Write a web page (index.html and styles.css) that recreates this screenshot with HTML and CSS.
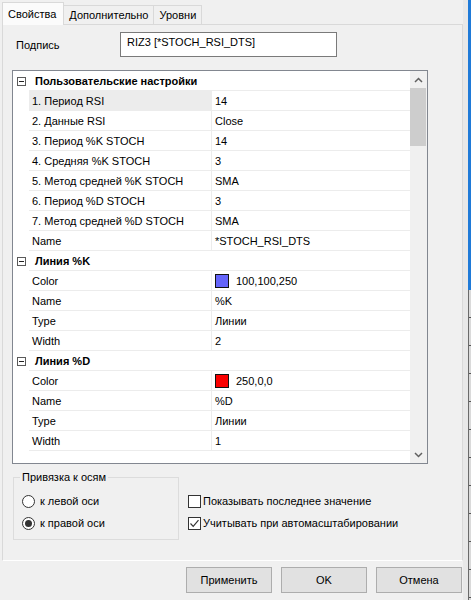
FILE: index.html
```html
<!DOCTYPE html>
<html>
<head>
<meta charset="utf-8">
<link rel="stylesheet" href="styles.css">
</head>
<body>
<div class="screen">
  <div class="dialog">
    <div class="tabs">
      <div class="tab active">Свойства</div>
      <div class="tab">Дополнительно</div>
      <div class="tab">Уровни</div>
    </div>
    <div class="page">
      <div class="caption-row">
        <div class="label">Подпись</div>
        <div class="textbox">RIZ3 [*STOCH_RSI_DTS]</div>
      </div>
      <div class="pgrid">
        <div class="rows">
          <div class="row cat"><div class="gut"><span class="minus"></span></div><div class="cat-name">Пользовательские настройки</div></div>
          <div class="row"><div class="gut"></div><div class="name sel">1. Период RSI</div><div class="val">14</div></div>
          <div class="row"><div class="gut"></div><div class="name">2. Данные RSI</div><div class="val">Close</div></div>
          <div class="row"><div class="gut"></div><div class="name">3. Период %K STOCH</div><div class="val">14</div></div>
          <div class="row"><div class="gut"></div><div class="name">4. Средняя %K STOCH</div><div class="val">3</div></div>
          <div class="row"><div class="gut"></div><div class="name">5. Метод средней %K STOCH</div><div class="val">SMA</div></div>
          <div class="row"><div class="gut"></div><div class="name">6. Период %D STOCH</div><div class="val">3</div></div>
          <div class="row"><div class="gut"></div><div class="name">7. Метод средней %D STOCH</div><div class="val">SMA</div></div>
          <div class="row"><div class="gut"></div><div class="name">Name</div><div class="val">*STOCH_RSI_DTS</div></div>
          <div class="row cat"><div class="gut"><span class="minus"></span></div><div class="cat-name">Линия %K</div></div>
          <div class="row"><div class="gut"></div><div class="name">Color</div><div class="val"><span class="swatch blue"></span>100,100,250</div></div>
          <div class="row"><div class="gut"></div><div class="name">Name</div><div class="val">%K</div></div>
          <div class="row"><div class="gut"></div><div class="name">Type</div><div class="val">Линии</div></div>
          <div class="row"><div class="gut"></div><div class="name">Width</div><div class="val">2</div></div>
          <div class="row cat"><div class="gut"><span class="minus"></span></div><div class="cat-name">Линия %D</div></div>
          <div class="row"><div class="gut"></div><div class="name">Color</div><div class="val"><span class="swatch red"></span>250,0,0</div></div>
          <div class="row"><div class="gut"></div><div class="name">Name</div><div class="val">%D</div></div>
          <div class="row"><div class="gut"></div><div class="name">Type</div><div class="val">Линии</div></div>
          <div class="row"><div class="gut"></div><div class="name">Width</div><div class="val">1</div></div>
        </div>
        <div class="vscroll">
          <div class="arrow"><svg width="9" height="6" viewBox="0 0 9 6"><path d="M1 5 L4.5 1.5 L8 5" fill="none" stroke="#606060" stroke-width="1.5"/></svg></div>
          <div class="track"><div class="thumb"></div></div>
          <div class="arrow"><svg width="9" height="6" viewBox="0 0 9 6"><path d="M1 1 L4.5 4.5 L8 1" fill="none" stroke="#606060" stroke-width="1.5"/></svg></div>
        </div>
      </div>
      <div class="bottom">
        <fieldset class="group">
          <legend>Привязка к осям</legend>
          <div class="opt"><span class="radio"></span>к левой оси</div>
          <div class="opt"><span class="radio on"><span class="dot"></span></span>к правой оси</div>
        </fieldset>
        <div class="checks">
          <div class="opt"><span class="cbox"></span>Показывать последнее значение</div>
          <div class="opt"><span class="cbox"><svg width="11" height="11" viewBox="0 0 11 11"><path d="M1.5 5.5 L4.2 8.3 L9.5 2.2" fill="none" stroke="#333" stroke-width="1.2"/></svg></span>Учитывать при автомасштабировании</div>
        </div>
      </div>
    </div>
    <div class="buttons">
      <div class="btn">Применить</div>
      <div class="btn">OK</div>
      <div class="btn">Отмена</div>
    </div>
  </div>
  <div class="side">
    <div class="side-a"></div>
    <div class="side-b">
      <div class="side-blue"></div>
      <div class="side-scale"></div>
    </div>
  </div>
</div>
</body>
</html>
```
FILE: styles.css
```css
* { box-sizing: border-box; }
html, body { margin: 0; padding: 0; }
body {
  background: #f0f0f0;
  font-family: "Liberation Sans", Arial, sans-serif;
  font-size: 11px;
  color: #000;
  width: 471px;
  height: 600px;
  overflow: hidden;
}
.screen { display: flex; width: 471px; height: 600px; }
.dialog { width: 463px; display: flex; flex-direction: column; }

.tabs {
  height: 24px;
  display: flex;
  align-items: flex-end;
  padding-left: 2px;
  position: relative;
  z-index: 1;
}
.tab {
  height: 19px;
  padding: 0 5px 0 5px;
  border: 1px solid #d9d9d9;
  border-bottom: none;
  background: #f0f0f0;
  display: flex;
  align-items: center;
  margin-left: -1px;
}
.tab.active {
  height: 23px;
  margin-bottom: -1px;
  margin-left: 0;
  padding: 0 7px 1px 5px;
  background: #fbfbfb;
  position: relative;
  z-index: 2;
}

.page {
  margin-left: 2px;
  width: 461px;
  height: 537px;
  border: 1px solid #d9d9d9;
  border-bottom-color: #ffffff;
  padding: 7px 0 0 9px;
  display: flex;
  flex-direction: column;
}
.caption-row { display: flex; align-items: center; height: 25px; }
.label { width: 108px; padding-left: 4px; padding-top: 1px; }
.textbox {
  width: 217px;
  height: 25px;
  border: 1px solid #7a7a7a;
  background: #fff;
  padding: 3px 0 0 6px;
}

.pgrid {
  margin-top: 13px;
  width: 416px;
  height: 394px;
  border: 1px solid #828790;
  background: #fff;
  display: flex;
}
.rows { width: 397px; overflow: hidden; }
.row { display: flex; height: 20px; }
.gut { width: 16px; flex: none; display: flex; align-items: center; padding-left: 4px; }
.minus {
  width: 9px;
  height: 9px;
  border: 1px solid #5a5a5a;
  position: relative;
  display: flex;
  align-items: center;
  justify-content: center;
}
.minus::after { content: ""; width: 5px; height: 1px; background: #222; }
.name {
  width: 182px;
  flex: none;
  padding-left: 3px;
  border-bottom: 1px solid #ececec;
  line-height: 20px;
  white-space: nowrap;
}
.name.sel { background: #ececec; }
.val {
  flex: 1;
  border-left: 1px solid #ececec;
  border-bottom: 1px solid #ececec;
  padding-left: 3px;
  display: flex;
  align-items: center;
  white-space: nowrap;
}
.cat-name {
  flex: 1;
  font-weight: bold;
  padding-left: 6px;
  line-height: 20px;
  border-bottom: 1px solid #ececec;
}
.swatch {
  width: 14px;
  height: 14px;
  border: 1px solid #111;
  margin-right: 7px;
}
.swatch.blue { background: #6464fa; }
.swatch.red { background: #fa0000; }

.vscroll {
  width: 17px;
  background: #f0f0f0;
  display: flex;
  flex-direction: column;
}
.arrow { height: 17px; display: flex; align-items: center; justify-content: center; }
.track { flex: 1; }
.thumb { height: 58px; background: #cdcdcd; margin: 0 1px 0 0; }

.bottom { display: flex; margin-top: 7px; }
.group {
  margin: 0 0 0 1px;
  width: 166px;
  height: 69px;
  border: 1px solid #dcdcdc;
  padding: 0 0 0 6px;
}
.group legend { padding: 0 2px; line-height: 13px; }
.opt { display: flex; align-items: center; height: 22px; white-space: nowrap; }
.group .opt:first-of-type { margin-top: 6px; }
.radio {
  width: 13px;
  height: 13px;
  border: 1px solid #333;
  border-radius: 50%;
  background: #fff;
  margin: 0 5px 0 2px;
  display: flex;
  align-items: center;
  justify-content: center;
}
.dot { width: 7px; height: 7px; border-radius: 50%; background: #333; }
.checks { margin-left: 9px; padding-top: 19px; }
.cbox {
  width: 13px;
  height: 13px;
  border: 1px solid #333;
  background: #fff;
  margin-right: 2px;
  display: flex;
  align-items: center;
  justify-content: center;
}

.buttons {
  display: flex;
  justify-content: flex-end;
  gap: 9px;
  padding: 6px 1px 0 0;
}
.btn {
  width: 86px;
  height: 26px;
  background: #e1e1e1;
  border: 1px solid #adadad;
  display: flex;
  align-items: center;
  justify-content: center;
}

.side { flex: 1; display: flex; }
.side-a { width: 5px; background: #e8e8e8; }
.side-b { flex: 1; display: flex; flex-direction: column; }
.side-blue { height: 290px; background: #1f7ad8; }
.side-scale {
  flex: 1;
  border-left: 1px solid #6a6a6a;
  background: repeating-linear-gradient(to bottom, #dadada 0 27px, #555 27px 28px);
}
```
